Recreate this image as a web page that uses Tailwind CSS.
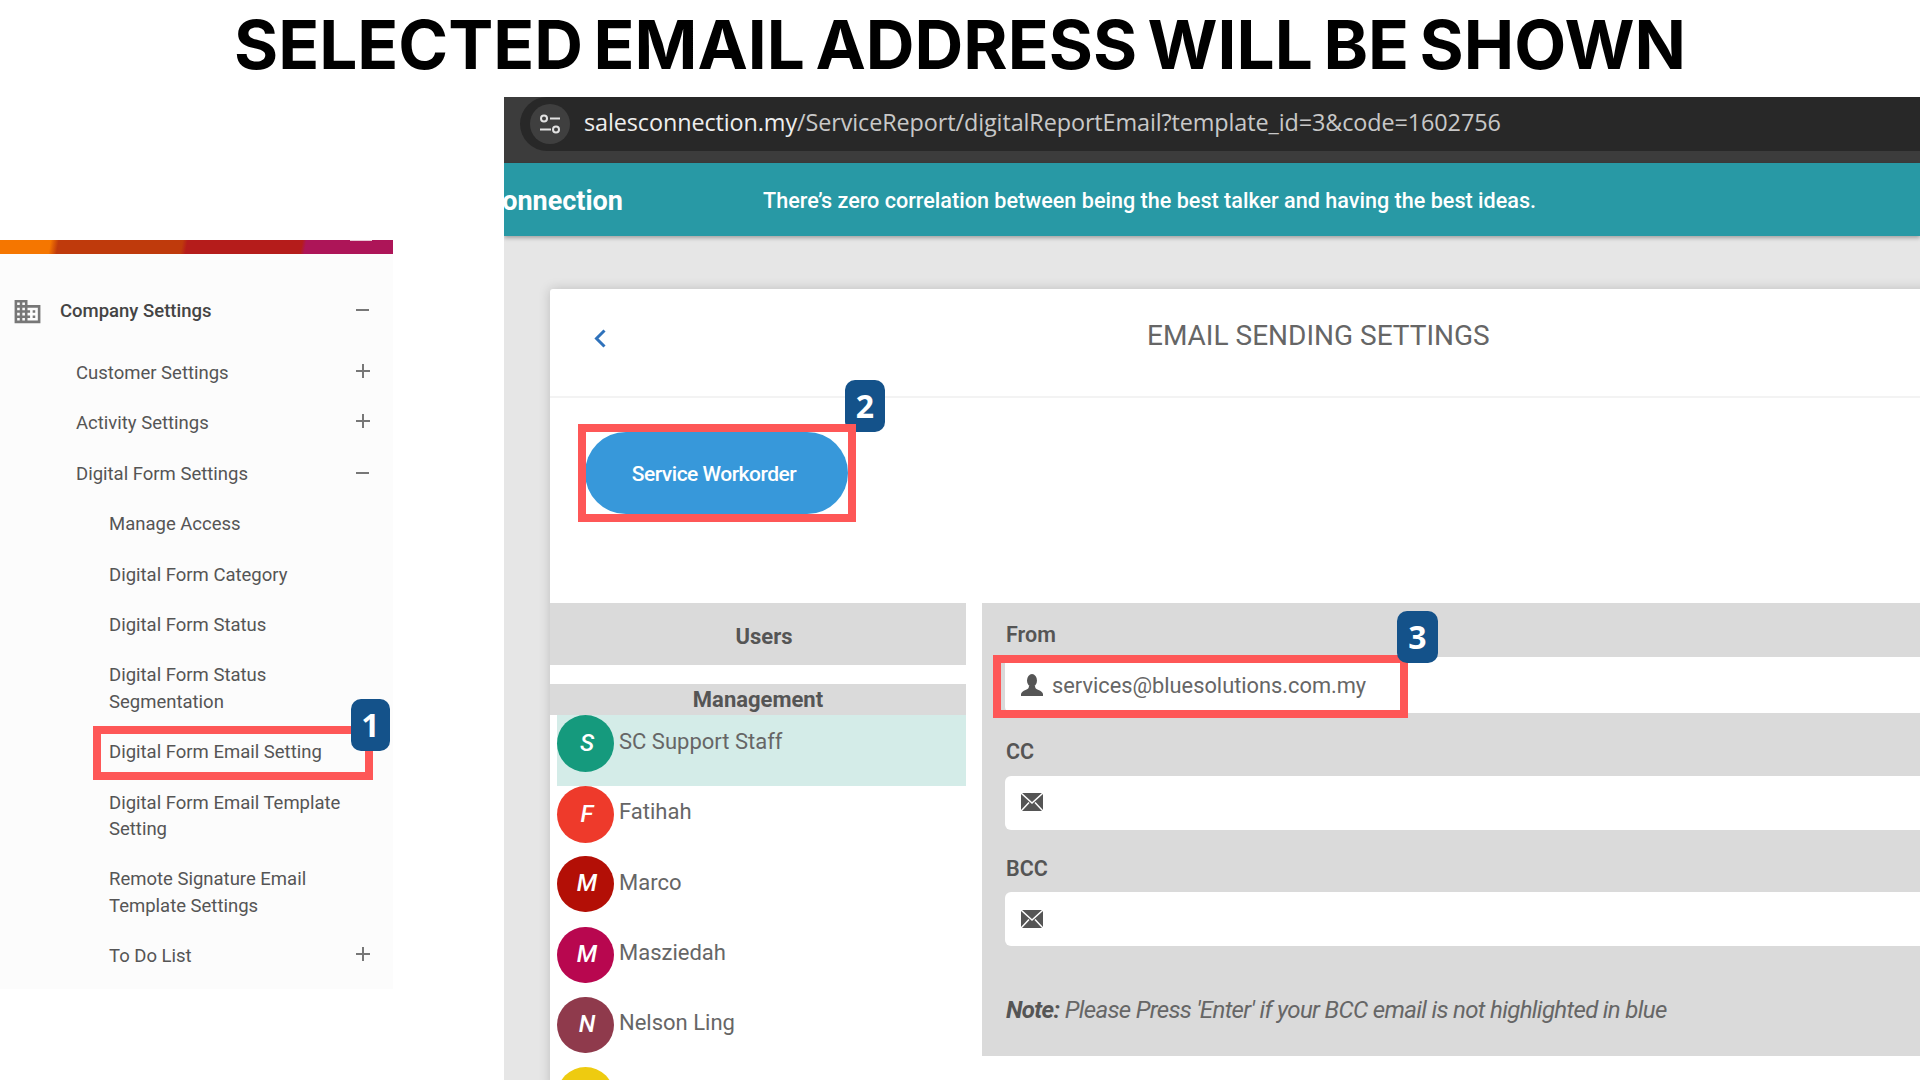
<!DOCTYPE html>
<html lang="en">
<head>
    <meta charset="UTF-8">
    <meta name="viewport" content="width=device-width, initial-scale=1.0">
    <title>Selected Email Address</title>
    <script src="https://cdn.jsdelivr.net/npm/@tailwindcss/browser@4"></script>
</head>
<body class="bg-white">
<div class="relative w-[1920px] h-[1080px] overflow-hidden bg-white font-['Roboto',sans-serif]">

    <!-- Heading -->
    <h1 class="h-[97px] text-center text-[67.500px] leading-[90px] font-bold [word-spacing:-5.500px] text-black font-['Inter',sans-serif]">SELECTED EMAIL ADDRESS WILL BE SHOWN</h1>

    <div class="flex">
        <!-- Sidebar -->
        <div class="w-[393px] shrink-0 pt-[143px]">
            <div class="relative h-[14px] bg-[linear-gradient(100deg,#f57600_0,#f57600_50px,#bf3a0c_58px,#bf3a0c_180px,#b51c1b_185px,#b51c1b_298px,#ad1558_302px)]">
                <div class="absolute left-[350px] top-0 w-[22px] h-[1px] bg-[#e8c8d4]"></div>
            </div>
            <ul class="h-[735px] bg-[#fcfcfc] pt-[32px] text-[18.500px] leading-[26.400px] text-[#555]">
                <li class="flex items-center h-[50px] mb-[12px] pl-[12px] pr-[24px]">
                    <svg class="w-[31px] h-[31px] mr-[17px] fill-[#777]" viewBox="0 0 24 24"><path d="M12 7V3H2v18h20V7H12zM6 19H4v-2h2v2zm0-4H4v-2h2v2zm0-4H4V9h2v2zm0-4H4V5h2v2zm4 12H8v-2h2v2zm0-4H8v-2h2v2zm0-4H8V9h2v2zm0-4H8V5h2v2zm10 12h-8v-2h2v-2h-2v-2h2v-2h-2V9h8v10zm-2-8h-2v2h2v-2zm0 4h-2v2h2v-2z"/></svg>
                    <span class="flex-1 font-medium text-[#444]">Company Settings</span>
                    <span class="w-[13px] h-[2px] -mt-[2px] bg-[#777]"></span>
                </li>
                <li class="flex items-center justify-between py-[12px] pl-[76px] pr-[23px]">
                    <span>Customer Settings</span>
                    <svg class="w-[14px] h-[14px] -mt-[5px] stroke-[#777] stroke-2" viewBox="0 0 14 14"><path d="M7 0v14M0 7h14"/></svg>
                </li>
                <li class="flex items-center justify-between py-[12px] pl-[76px] pr-[23px]">
                    <span>Activity Settings</span>
                    <svg class="w-[14px] h-[14px] -mt-[5px] stroke-[#777] stroke-2" viewBox="0 0 14 14"><path d="M7 0v14M0 7h14"/></svg>
                </li>
                <li class="flex items-center justify-between py-[12px] pl-[76px] pr-[24px]">
                    <span>Digital Form Settings</span>
                    <span class="w-[13px] h-[2px] -mt-[3px] bg-[#777]"></span>
                </li>
                <li class="py-[12px] pl-[109px]">Manage Access</li>
                <li class="py-[12px] pl-[109px]">Digital Form Category</li>
                <li class="py-[12px] pl-[109px]">Digital Form Status</li>
                <li class="py-[12px] pl-[109px]">Digital Form Status<br>Segmentation</li>
                <li class="py-[12px] pl-[109px]">Digital Form Email Setting</li>
                <li class="py-[12px] pl-[109px]">Digital Form Email Template<br>Setting</li>
                <li class="py-[12px] pl-[109px]">Remote Signature Email<br>Template Settings</li>
                <li class="flex items-center justify-between py-[12px] pl-[109px] pr-[23px]">
                    <span>To Do List</span>
                    <svg class="w-[14px] h-[14px] -mt-[5px] stroke-[#777] stroke-2" viewBox="0 0 14 14"><path d="M7 0v14M0 7h14"/></svg>
                </li>
            </ul>
        </div>

        <!-- Browser capture -->
        <div class="w-[1416px] h-[983px] shrink-0 ml-[111px] bg-[#e6e6e6] overflow-hidden">
            <div class="h-[66px] bg-[#3c3c3c]">
                <div class="flex items-center h-[54px] ml-[16px] pl-[10px] rounded-bl-[27px] rounded-tl-[27px] bg-[#282828]">
                    <div class="flex items-center justify-center w-[40px] h-[40px] rounded-full bg-[#3f3f3f]">
                        <svg class="w-[24px] h-[24px] stroke-[#e2e2e2] stroke-2 fill-none" viewBox="0 0 24 24"><circle cx="6" cy="6.500" r="3"/><path d="M12 6.500h10M2 17.500h11"/><circle cx="18" cy="17.500" r="3"/></svg>
                    </div>
                    <p class="ml-[14px] pb-[2px] text-[23.400px] text-[#c8c8c8] font-['Open_Sans',sans-serif] tracking-[-0.100px]"><span class="text-[#eeeeee]">salesconnection.my</span>/ServiceReport/digitalReportEmail?template_id=3&amp;code=1602756</p>
                </div>
            </div>
            <div class="flex items-center h-[73px] pt-[4px] bg-[#2899a5] shadow-[0_2px_4px_rgba(0,0,0,0.3)] text-white">
                <div class="flex justify-end w-[119px] overflow-hidden text-[27px] font-bold whitespace-nowrap"><span class="shrink-0">Salesconnection</span></div>
                <p class="ml-[140px] text-[21.600px] font-medium">There’s zero correlation between being the best talker and having the best ideas.</p>
            </div>

            <!-- Card -->
            <div class="w-[1400px] h-[800px] mt-[53px] ml-[46px] rounded-tl-[3px] bg-white shadow-[0_0_12px_rgba(0,0,0,0.18)]">
                <div class="relative flex items-center h-[109px] border-b-2 border-[#f3f3f3] pb-[13px] pl-[597px]">
                    <svg class="absolute left-[44px] top-[40px] w-[12px] h-[19px] stroke-[#2f72bb] stroke-[3] fill-none" viewBox="0 0 12 19"><path d="M10.500 1.500 2.500 9.500l8 8"/></svg>
                    <h2 class="text-[28px] text-[#666]">EMAIL SENDING SETTINGS</h2>
                </div>
                <div class="h-[205px] pt-[34px] pl-[35px]">
                    <button class="w-[263px] h-[82px] pt-[4px] pr-[5px] rounded-full bg-[#3798da] text-[21px] font-medium tracking-[-0.500px] text-white">Service Workorder</button>
                </div>
                <div class="flex">
                    <!-- Users list -->
                    <div class="w-[416px] shrink-0">
                        <div class="flex items-center justify-center h-[62px] pt-[4px] pl-[12px] bg-[#dadada] text-[22px] font-bold text-[#555]">Users</div>
                        <div class="mt-[19px] h-[31px] bg-[#dadada] text-center text-[22px] leading-[31px] font-bold text-[#555]">Management</div>
                        <div class="pl-[7px] text-[22px] leading-[26px] text-[#666]">
                            <div class="flex h-[71px] bg-[#d4ece8]">
                                <div class="flex items-center justify-center w-[57px] h-[57px] pb-[2px] pl-[3px] rounded-full bg-[#159a7d] text-[24px] font-medium italic text-white">S</div>
                                <span class="ml-[5px] pt-[14px]">SC Support Staff</span>
                            </div>
                            <div class="flex h-[70px]">
                                <div class="flex items-center justify-center w-[57px] h-[57px] pb-[2px] pl-[3px] rounded-full bg-[#ee3a2b] text-[24px] font-medium italic text-white">F</div>
                                <span class="ml-[5px] pt-[13px]">Fatihah</span>
                            </div>
                            <div class="flex h-[71px]">
                                <div class="flex items-center justify-center w-[57px] h-[56px] pb-[2px] pl-[3px] rounded-full bg-[#b30f06] text-[24px] font-medium italic text-white">M</div>
                                <span class="ml-[5px] pt-[14px]">Marco</span>
                            </div>
                            <div class="flex h-[70px]">
                                <div class="flex items-center justify-center w-[57px] h-[56px] pb-[2px] pl-[3px] rounded-full bg-[#b8074f] text-[24px] font-medium italic text-white">M</div>
                                <span class="ml-[5px] pt-[13px]">Masziedah</span>
                            </div>
                            <div class="flex h-[70px]">
                                <div class="flex items-center justify-center w-[57px] h-[56px] pb-[2px] pl-[3px] rounded-full bg-[#8f3a4c] text-[24px] font-medium italic text-white">N</div>
                                <span class="ml-[5px] pt-[13px]">Nelson Ling</span>
                            </div>
                            <div class="w-[57px] h-[57px] rounded-full bg-[#eecb10]"></div>
                        </div>
                    </div>

                    <!-- Address form -->
                    <div class="flex-1 h-[453px] ml-[16px] pl-[23px] pt-[19px] bg-[#dadada] text-[#555]">
                        <label class="block h-[35px] text-[21.500px] leading-[26px] font-semibold pl-[1px]">From</label>
                        <div class="flex items-center h-[56px] pl-[16px] rounded-l-[6px] bg-white text-[21.800px] text-[#666]">
                            <svg class="w-[22px] h-[22px] fill-[#555]" viewBox="0 0 22 22"><ellipse cx="11" cy="6.500" rx="5" ry="6.500"/><path d="M8 12c0 2-1 3-3.500 4C2 17 .5 18 0 20v2h22v-2c-.5-2-2-3-4.500-4-2.500-1-3.500-2-3.500-4z"/></svg>
                            <span class="ml-[9px] pt-[2px]">services@bluesolutions.com.my</span>
                        </div>
                        <label class="block h-[63px] pt-[26px] text-[21.500px] leading-[26px] font-semibold pl-[1px]">CC</label>
                        <div class="flex items-center h-[54px] pl-[16px] rounded-l-[6px] bg-white">
                            <svg class="w-[22px] h-[18px] -mt-[3px]" viewBox="0 0 22 18"><rect width="22" height="18" fill="#555"/><path d="M0 0l11 10L22 0M0 18l8-8.500M22 18l-8-8.500" fill="none" stroke="#fff" stroke-width="1.500"/></svg>
                        </div>
                        <label class="block h-[62px] pt-[26px] text-[21.500px] leading-[26px] font-semibold pl-[1px]">BCC</label>
                        <div class="flex items-center h-[54px] pl-[16px] rounded-l-[6px] bg-white">
                            <svg class="w-[22px] h-[18px]" viewBox="0 0 22 18"><rect width="22" height="18" fill="#555"/><path d="M0 0l11 10L22 0M0 18l8-8.500M22 18l-8-8.500" fill="none" stroke="#fff" stroke-width="1.500"/></svg>
                        </div>
                        <p class="mt-[50px] pl-[1px] text-[24px] leading-[28px] italic tracking-[-0.650px] text-[#666]"><strong class="font-bold text-[#555]">Note:</strong> Please Press 'Enter' if your BCC email is not highlighted in blue</p>
                    </div>
                </div>
            </div>
        </div>
    </div>

    <!-- Callouts -->
    <div class="absolute left-[93px] top-[726px] w-[280px] h-[54px] border-[8px] border-[#fe5757]"></div>
    <div class="absolute left-[351px] top-[699px] flex items-center justify-center w-[39px] h-[52px] rounded-[10px] bg-[#14528a] text-[32px] font-bold text-white font-['Open_Sans',sans-serif]">1</div>

    <div class="absolute left-[845px] top-[380px] flex items-center justify-center w-[40px] h-[52px] rounded-[10px] bg-[#14528a] text-[32px] font-bold text-white font-['Open_Sans',sans-serif]">2</div>
    <div class="absolute left-[578px] top-[424px] w-[278px] h-[98px] border-[8px] border-[#fe5757]"></div>

    <div class="absolute left-[993px] top-[655px] w-[415px] h-[63px] border-[8px] border-[#fe5757]"></div>
    <div class="absolute left-[1397px] top-[611px] flex items-center justify-center w-[41px] h-[52px] rounded-[10px] bg-[#14528a] text-[32px] font-bold text-white font-['Open_Sans',sans-serif]">3</div>
</div>
</body>
</html>
